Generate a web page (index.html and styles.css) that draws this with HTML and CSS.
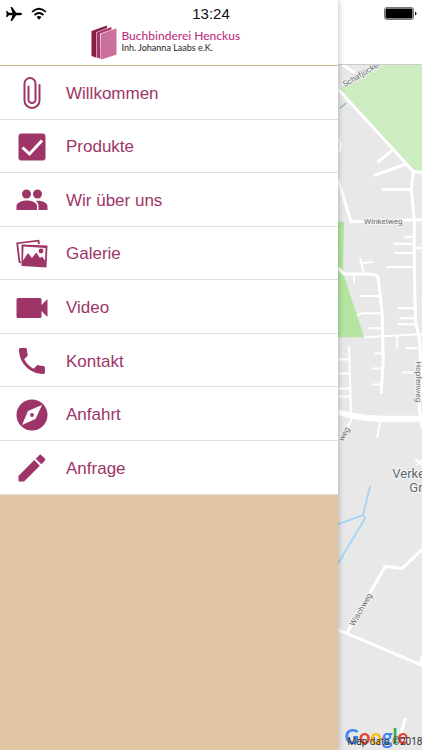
FILE: index.html
```html
<!DOCTYPE html>
<html lang="de">
<head>
    <meta charset="utf-8">
    <meta name="viewport" content="width=device-width, initial-scale=1">
    <title>Buchbinderei Henckus</title>
    <link rel="stylesheet" href="styles.css">
</head>
<body>
    <div class="status-bar">
        <div class="status-left">
            <svg width="18" height="16" viewBox="0 0 18 16"><path d="M17 8c0-.8-.8-1.200-1.800-1.200h-4L7 1H5.500l2 5.800H3.800L2.200 5H1l.8 3L1 11h1.200l1.600-1.800h3.700l-2 5.800H7l4.200-5.800h4c1 0 1.800-.4 1.800-1.200z"/></svg>
            <svg width="16" height="13" viewBox="0 0 16 13"><g fill="none" stroke="#000" stroke-width="1.700"><path d="M1 5q7-6.500 14 0"/><path d="M3.500 8q4.500-4 9 0"/></g><path d="M5.500 10q2.500-2 5 0L8 12.700z"/></svg>
        </div>
        <span class="clock">13:24</span>
        <div class="status-right">
            <svg width="33" height="13" viewBox="0 0 33 13"><rect x=".5" y=".5" width="29" height="12" rx="2" fill="#fff" stroke="#777"/><rect x="1.500" y="1.500" width="27" height="10" rx="1"/><path d="M31 4.500q3 2 0 4z"/></svg>
        </div>
    </div>

    <div class="app">
        <div class="drawer">
            <div class="brand">
                <svg width="26" height="35" viewBox="0 0 26 35">
                    <path fill="#851f45" d="M.5 6 16 .5v26L6 33 .5 31z"/>
                    <path fill="#fff" d="M5 7.200 20 1.500v27L8 34l-3-1z"/>
                    <path fill="#a93468" d="M5.500 7.500 20.500 2v26L9 33.500l-3.500-1z"/>
                    <path fill="#f2dce8" d="M9 8.500 25 3v27L9.500 35z"/>
                    <path fill="#c9709c" d="M10 9 25.500 3.500v26L10 34.500z"/>
                </svg>
                <div>
                    <div class="brand-name">Buchbinderei Henckus</div>
                    <div class="brand-owner">Inh. Johanna Laabs e.K.</div>
                </div>
            </div>
            <nav>
                <ul class="menu">
                    <li><a href="#willkommen">
                        <svg viewBox="0 0 32 32"><path fill="none" stroke="#9d3568" stroke-width="2" stroke-linecap="round" d="M23.500 8v15.500a7.500 7.500 0 0 1-15 0V6.500a5.500 5.500 0 0 1 11 0v16a3.500 3.500 0 0 1-7 0V9.500"/></svg>
                        <span>Willkommen</span></a></li>
                    <li><a href="#produkte">
                        <svg viewBox="0 0 32 32"><rect x="2.500" y="2.500" width="27" height="27" rx="3"/><path fill="none" stroke="#fff" stroke-width="3" d="m6.500 16.500 7 6.500L26 9.500"/></svg>
                        <span>Produkte</span></a></li>
                    <li><a href="#ueber-uns">
                        <svg viewBox="0 0 32 32"><circle cx="10.500" cy="10" r="4.500"/><circle cx="21.500" cy="10" r="4.500"/><path d="M.5 26v-4c0-3.700 6.500-5.500 10.500-5.500s10 1.800 10 5.500v4zM22.500 26v-4c0-2.200-1-3.800-2.800-5.200 5-.8 11.800 1.400 11.800 5.200v4z"/></svg>
                        <span>Wir über uns</span></a></li>
                    <li><a href="#galerie">
                        <svg viewBox="0 0 32 32"><path fill="none" stroke="#9d3568" stroke-width="1.800" d="M5 24.500 3.500 24 1.200 5.200l21.300-2.500.5 3.500"/><path fill-rule="evenodd" d="m5.500 6.500 26 1-1 22-25-1.500zm2 2L7 22.500l5-7.500 4 5 4.300-5.500L24 20l2-1.500 3 4 .6-12.500z"/><circle cx="25" cy="13" r="2.400"/></svg>
                        <span>Galerie</span></a></li>
                    <li><a href="#video">
                        <svg viewBox="0 0 32 32"><path d="M2 6h22q1.500 0 1.500 1.500V13l6-6v18l-6-6v5.500Q25.500 26 24 26H2Q.5 26 .5 24.500v-17Q.5 6 2 6z"/></svg>
                        <span>Video</span></a></li>
                    <li><a href="#kontakt">
                        <svg viewBox="0 0 24 24"><path d="M6.620 10.790c1.440 2.830 3.760 5.140 6.590 6.590l2.200-2.200c.27-.27.67-.36 1.020-.24 1.120.37 2.330.57 3.570.57.550 0 1 .45 1 1V20c0 .55-.45 1-1 1C10.610 21 3 13.390 3 4c0-.55.45-1 1-1h3.500c.55 0 1 .45 1 1 0 1.250.2 2.450.57 3.570.11.35.03.74-.25 1.020z" transform="translate(-1 -1) scale(1.080)"/></svg>
                        <span>Kontakt</span></a></li>
                    <li><a href="#anfahrt">
                        <svg viewBox="0 0 32 32"><circle cx="16" cy="16" r="15.500"/><path fill="#fff" d="M26 6 19.500 20 6 26l6-14z"/><circle cx="16" cy="16" r="1.900"/></svg>
                        <span>Anfahrt</span></a></li>
                    <li><a href="#anfrage">
                        <svg viewBox="0 0 32 32"><path d="M2.500 24v5.500H8L23.800 13.700l-5.600-5.600zM28.800 8.800q1.200-1.100 0-2.200l-3.400-3.400q-1.100-1.200-2.200 0L19.700 6.700l5.600 5.600z"/></svg>
                        <span>Anfrage</span></a></li>
                </ul>
            </nav>
        </div>

        <main class="page">
            <div class="page-header"></div>
            <div class="map">
                <svg class="map-tiles" viewBox="338 65 84 685" preserveAspectRatio="xMinYMin slice">
                    <path fill="#cdecc1" d="M338 89 382 65h40v106h-9z"/>
                    <path fill="#b4e5a0" d="M338 221h6l-1 45 1 9 20 61h-26z"/>
                    <!-- streets -->
                    <g class="street">
                        <path d="m338 89 75 82 10 1M392 150l-15 12M407 163l-33 12M343 65l12 8"/>
                        <path d="M413 171l-2 19 3 30v43l1 57 4 17 2 33-2 37 3 20"/>
                        <path d="M338 179l13 42 71-2M382 189h29"/>
                        <path d="M338 267l6 6h23q10 0 11 4l4 36 1 47-2 32"/>
                    </g>
                    <g class="street lane">
                        <path d="M338 139q6 7 0 13M404 236h10M393 243h21M394 252h20M416 247h7M386 266h28M360 257l4 16M362 262l11-1M354 274v8M360 295h19M357 314l5-2h20M368 327h14"/>
                        <path d="M364 336l54-3h5M397 335v12M397 307h17M399 317h16M397 323h18M405 347h13M374 352h9M372 367h11M372 383h9M402 371h13"/>
                        <path d="M349 345l2 70M338 358h12M338 372h12M338 387h13M338 395h13M380 418l-3 18M352 416l-9 19M415 457l8 7M416 463l7-6"/>
                    </g>
                    <path class="street main-road" d="M338 410q12 5 42 7h43"/>
                    <path class="street" d="m347 630 38-66 17 2 21-20M338 627l85 36M423 650l-3 11M405 715l-4 15"/>
                    <path class="street lane" d="M338 750l8-3"/>
                    <path fill="none" stroke="#a9d5f6" stroke-width="2" d="m370 484-7 28 2 4-27 45M338 522l25-9"/>
                    <path stroke="#70b070" d="m340 108 6-5"/>
                    <g class="street-name">
                        <text transform="translate(345 87) rotate(-31)">Schafjückenweg</text>
                        <text x="364" y="223">Winkelweg</text>
                        <text transform="translate(416 360) rotate(90)">Hopfenweg</text>
                        <text transform="translate(343 440) rotate(-62)">weg</text>
                        <text transform="translate(354 624) rotate(-60)">Wischweg</text>
                    </g>
                    <g class="place-name">
                        <text x="392" y="476">Verkehrs</text>
                        <text x="409" y="490">Gruppe</text>
                    </g>
                </svg>
                <div class="google"><span class="blue">G</span><span class="red">o</span><span class="yellow">o</span><span class="blue">g</span><span class="green">l</span><span class="red">e</span></div>
                <div class="map-data">Map data ©2018</div>
            </div>
        </main>
    </div>
</body>
</html>
```
FILE: styles.css
```css
* {
    box-sizing: border-box;
}

body {
    margin: 0;
    font-family: "Liberation Sans", Arial, sans-serif;
    background-color: #fff;
    overflow: hidden;
}

/* status bar lies over drawer and page */
.status-bar {
    position: absolute;
    top: 0;
    left: 0;
    right: 0;
    z-index: 3;
    display: grid;
    grid-template-columns: 1fr auto 1fr;
    align-items: center;
    height: 27px;
    padding: 0 5px;
}

.status-left {
    display: flex;
    align-items: center;
    gap: 8px;
}

.status-right {
    display: flex;
    justify-content: flex-end;
}

.clock {
    font-size: 15px;
    color: #111;
}

.app {
    display: flex;
    height: 100vh;
}

.drawer {
    position: relative;
    z-index: 2;
    flex: 0 0 80%;
    background-color: #e1c4a2;
    box-shadow: 0 0 6px rgba(0, 0, 0, 0.3);
}

.brand {
    display: flex;
    justify-content: center;
    align-items: flex-start;
    gap: 4px;
    height: 66px;
    padding-top: 25px;
    padding-right: 6px;
    background-color: #fff;
    border-bottom: 1px solid #dcb48c;
}

.brand-name {
    margin-top: 3px;
    font-family: Lato, sans-serif;
    font-size: 12px;
    font-weight: 500;
    line-height: 15px;
    color: #c0327f;
}

.brand-owner {
    font-family: Lato, sans-serif;
    font-size: 9px;
    line-height: 10px;
    color: #222;
}

.menu {
    margin: 0;
    padding: 0;
    list-style: none;
}

.menu li {
    height: calc(100vh / 14);
    background-color: #fff;
    border-bottom: 1px solid #dfdfdf;
}

.menu a {
    display: flex;
    align-items: center;
    gap: 18px;
    height: 100%;
    padding-top: 2px;
    padding-left: 16px;
    font-size: 17px;
    color: #9d3568;
    text-decoration: none;
}

.menu svg {
    width: 32px;
    height: 32px;
    fill: #9d3568;
}

.menu span {
    padding-top: 1px;
}

.page {
    flex: 1;
    min-width: 0;
    display: flex;
    flex-direction: column;
}

.page-header {
    height: 65px;
    border-bottom: 1px solid #ccc;
}

.map {
    position: relative;
    flex: 1;
    min-height: 0;
    overflow: hidden;
    background-color: #e8e8e8;
}

.map-tiles {
    display: block;
    width: 100%;
    height: 100%;
}

.street {
    fill: none;
    stroke: #fff;
    stroke-width: 3px;
}

.lane {
    stroke-width: 2px;
}

.main-road {
    stroke-width: 6px;
}

.street-name {
    font-family: Roboto, sans-serif;
    font-size: 8px;
    fill: #6c6c6c;
    stroke: #f4f4f4;
    stroke-width: 2px;
    paint-order: stroke;
}

.place-name {
    font-family: Roboto, sans-serif;
    font-size: 13px;
    fill: #5d6b76;
    stroke: #f4f4f4;
    stroke-width: 2px;
    paint-order: stroke;
}

.google {
    position: absolute;
    left: 7px;
    bottom: 2px;
    font-family: Lato, sans-serif;
    font-size: 20px;
    font-weight: bold;
    line-height: 24px;
}

.map-data {
    position: absolute;
    left: 10px;
    bottom: 2px;
    font-family: Roboto, sans-serif;
    font-size: 10px;
    line-height: 12px;
    color: #333;
    white-space: nowrap;
}

.blue {
    color: #4285f4;
}

.red {
    color: #ea4335;
}

.yellow {
    color: #fbbc05;
}

.green {
    color: #34a853;
}
```
